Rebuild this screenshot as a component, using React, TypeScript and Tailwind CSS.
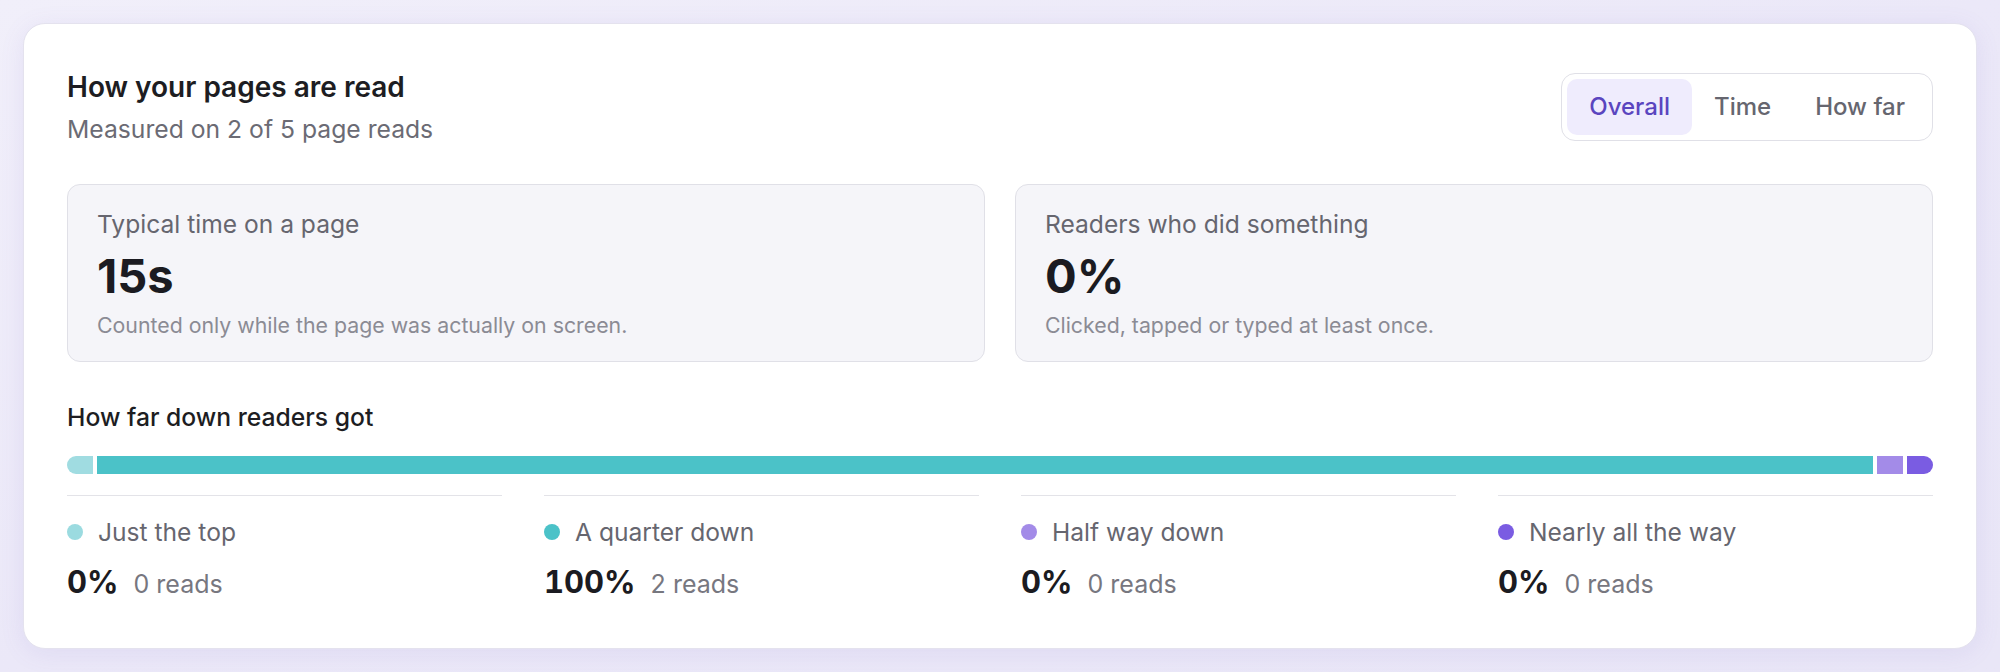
import React from 'react';

type Segment = { label: string; color: string; pct: string; reads: string };

const segments: Segment[] = [
  { label: 'Just the top', color: 'bg-[#9bdbe0]', pct: '0%', reads: '0 reads' },
  { label: 'A quarter down', color: 'bg-[#4bc2c8]', pct: '100%', reads: '2 reads' },
  { label: 'Half way down', color: 'bg-[#a38be8]', pct: '0%', reads: '0 reads' },
  { label: 'Nearly all the way', color: 'bg-[#7a5ce2]', pct: '0%', reads: '0 reads' },
];

const StatCard = ({ label, value, note }: { label: string; value: string; note: string }) => (
  <div className="flex flex-col rounded-[13px] border border-[#e0e0e7] bg-[#f5f5f9] px-[29px] pt-[23px] pb-[22px]">
    <span className="text-[24.6px] leading-[32px] text-[#66666f]">{label}</span>
    <span className="mt-[8px] text-[47px] leading-[56px] font-bold text-[#1b1b21]">{value}</span>
    <span className="mt-[7px] text-[21.3px] leading-[28px] text-[#8b8b94]">{note}</span>
  </div>
);

export default function App() {
  const tabs = ['Overall', 'Time', 'How far'];

  return (
    <div
      className="min-h-screen bg-gradient-to-br from-[#f1effa] via-[#ebe8f8] to-[#e9e6f7] p-[23px]"
      style={{ fontFamily: 'Inter, "Noto Sans", sans-serif' }}
    >
      <div className="rounded-[22px] border border-[#e4e2ee] bg-white px-[43px] pt-[45px] pb-[46px] shadow-[0_4px_24px_rgba(120,100,200,0.10)]">
        {/* Header */}
        <div className="flex items-start justify-between">
          <div className="flex flex-col">
            <span className="text-[28px] leading-[36px] font-semibold text-[#1d1d22]">How your pages are read</span>
            <span className="mt-[7px] text-[24.7px] leading-[34px] text-[#6b6b74]">Measured on 2 of 5 page reads</span>
          </div>
          <div className="mt-[4px] flex items-center rounded-[14px] border border-[#e0e0e7] p-[5px]">
            {tabs.map((t, i) => (
              <button
                key={t}
                className={`h-[56px] rounded-[10px] px-[22px] text-[24px] font-medium ${
                  i === 0 ? 'bg-[#efecfd] text-[#5a45bf]' : 'text-[#66666f]'
                }`}
              >
                {t}
              </button>
            ))}
          </div>
        </div>

        {/* Stat cards */}
        <div className="mt-[38px] grid grid-cols-2 gap-[30px]">
          <StatCard label="Typical time on a page" value="15s" note="Counted only while the page was actually on screen." />
          <StatCard label="Readers who did something" value="0%" note="Clicked, tapped or typed at least once." />
        </div>

        {/* Scroll depth */}
        <div className="mt-[39px] text-[24.7px] leading-[32px] font-medium text-[#1d1d22]">How far down readers got</div>

        <div className="mt-[23px] flex h-[18px] gap-[4px] overflow-hidden rounded-full">
          <div className="w-[26px] bg-[#a0dce1]" />
          <div className="flex-1 bg-[#4bc2c8]" />
          <div className="w-[26px] bg-[#a38be8]" />
          <div className="w-[26px] bg-[#7a5ce2]" />
        </div>

        <div className="mt-[21px] grid grid-cols-4 gap-[42px]">
          {segments.map((s) => (
            <div key={s.label} className="border-t border-[#e3e3e8] pt-[20px]">
              <div className="flex items-center gap-[15px]">
                <span className={`h-[16px] w-[16px] rounded-full ${s.color}`} />
                <span className="text-[24.6px] leading-[32px] text-[#66666f]">{s.label}</span>
              </div>
              <div className="mt-[14px] flex items-baseline gap-[15px]">
                <span className="text-[31px] leading-[40px] font-bold tabular-nums text-[#1b1b21]">{s.pct}</span>
                <span className="text-[25px] leading-[32px] text-[#77777f]">{s.reads}</span>
              </div>
            </div>
          ))}
        </div>
      </div>
    </div>
  );
}
